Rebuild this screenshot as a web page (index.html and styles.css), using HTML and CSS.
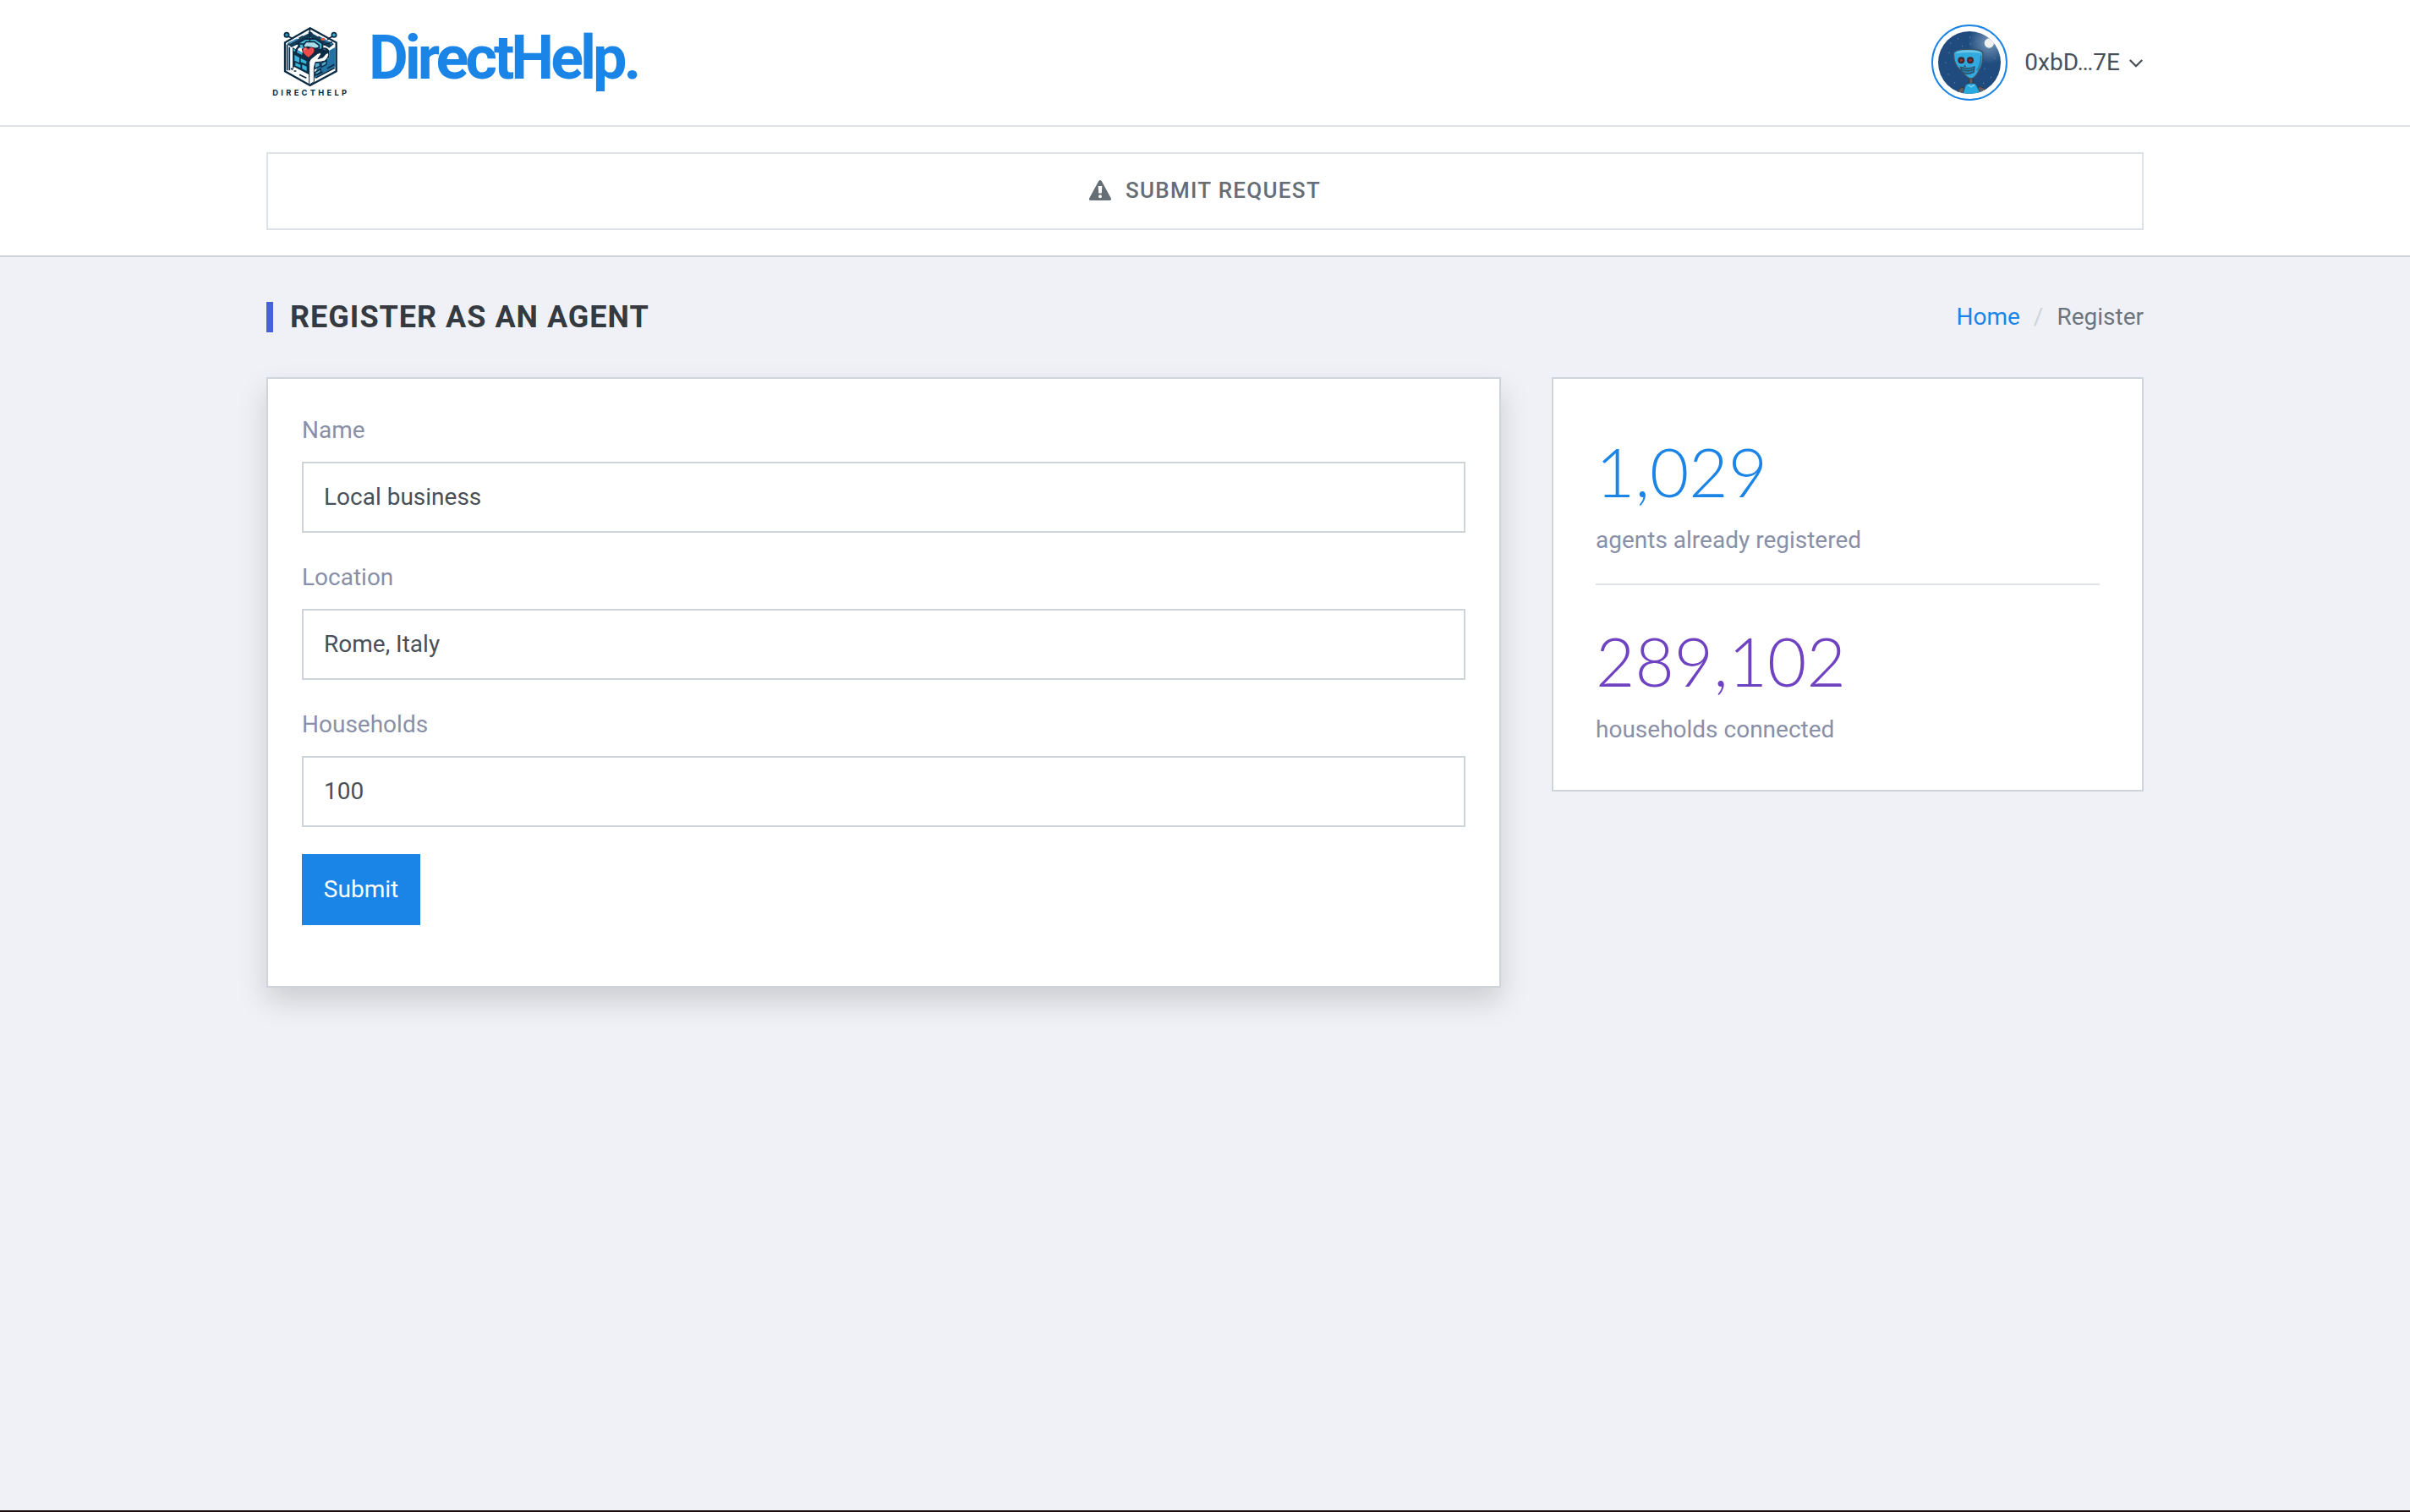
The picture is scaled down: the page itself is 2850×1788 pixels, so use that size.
FILE: index.html
```html
<!DOCTYPE html>
<html lang="en">
<head>
<meta charset="utf-8">
<title>DirectHelp</title>
<link rel="stylesheet" href="styles.css">
</head>
<body>
<header class="header">
  <div class="container header-row">
    <a class="brand">
      <svg class="brand-logo" viewBox="45 45 300 270">
        <path d="M200 70 293 121V223L200 273 111 223V121Z" fill="#fff" stroke="#0a2a43" stroke-width="7"/>
        <path d="M200 82 285 126 268 140 234 121 200 102 166 122 134 138 118 126Z" fill="#153c56"/>
        <path d="M128 122 160 104M174 96 194 86M210 87 230 98" stroke="#e9f4f8" stroke-width="5"/>
        <path d="M124 124 155 109M237 104 278 127" stroke="#2f86c4" stroke-width="5"/>
        <path d="M127 137V220M119 128V220" stroke="#0a2a43" stroke-width="5"/>
        <path d="M138 138 200 172V246L138 218Z" fill="#0d3048"/>
        <path d="M141 143 172 157V165L141 151ZM145 165 162 174V192L145 185ZM167 177 187 187V197L167 190ZM172 199 188 206V222L172 214ZM148 192 166 200V211L148 203Z" fill="#36b5d8"/>
        <path d="M208 250 290 207V137L268 149V174L245 190 225 190V212Z" fill="#2374a5"/>
        <path d="M215 192H235V204L217 214ZM240 194 258 184V198L240 208ZM218 226 238 215V226L218 237Z" fill="#55aacd" stroke="#0a2a43" stroke-width="4"/>
        <path d="M219 247 287 211M222 236 245 225M261 213 286 199" stroke="#0a2a43" stroke-width="5"/>
        <path d="M160 139V121L183 108H219L244 124V143L224 154" fill="#4ab9d5" stroke="#0a2a43" stroke-width="6"/>
        <path d="M176 131 186 118H215L232 130V139L214 145H184Z" fill="#a9dce9" stroke="#0a2a43" stroke-width="5"/>
        <path d="M199 72V117M151 126H179M247 130 279 119" stroke="#0a2a43" stroke-width="5"/>
        <path d="M150 157Q150 142 164 132M242 144Q256 138 265 151" fill="none" stroke="#0a2a43" stroke-width="7"/>
        <path d="M170 143 190 134 222 140 268 150 268 174 240 190 206 190 182 182Z" fill="#0a2a43"/>
        <path d="M143 207 195 234V247L137 219Z" fill="#fff"/>
        <path d="M132 213 139 217M143 222 151 222M162 235 187 247" stroke="#0a2a43" stroke-width="5"/>
        <path d="M197 268V190Q200 179 208 175L227 160Q236 155 240 161L228 179 246 173 256 161Q263 155 267 162 265 174 253 186 242 190 219 191L214 210V260L200 269Z" fill="#fff" stroke="#0a2a43" stroke-width="3"/>
        <path d="M194 174C182 164 174 159 174 148C174 136 188 134 194 145C200 134 215 136 215 149C214 160 204 166 194 174Z" fill="#ee4a4b" stroke="#5a2434" stroke-width="2"/>
        <path d="M180 148Q180 143 185 142" fill="none" stroke="#ffaaa0" stroke-width="3"/>
        <ellipse cx="246" cy="109" rx="8" ry="5" fill="#f0563c"/>
        <path d="M123 99 139 107M279 99 261 110" stroke="#0a2a43" stroke-width="5"/>
        <circle cx="117" cy="94" r="8" fill="#2595b8" stroke="#0a2a43" stroke-width="5"/>
        <circle cx="285" cy="94" r="8" fill="#36b5d8" stroke="#0a2a43" stroke-width="5"/>
        <text class="logo-text" x="67" y="308" textLength="263">DIRECTHELP</text>
      </svg>
      <span class="brand-name">DirectHelp.</span>
    </a>
    <div class="account">
      <svg class="avatar" viewBox="42 27 270 270">
        <defs>
          <radialGradient id="sky" gradientUnits="userSpaceOnUse" cx="247" cy="92" r="75">
            <stop offset="0" stop-color="#7898b8"/><stop offset="1" stop-color="#1f4b7e"/>
          </radialGradient>
          <clipPath id="disc"><circle cx="177" cy="162" r="111"/></clipPath>
        </defs>
        <circle cx="177" cy="162" r="132" fill="#fff" stroke="#1b84e7" stroke-width="6"/>
        <g clip-path="url(#disc)">
          <path d="M60 45H294V279H60Z" fill="url(#sky)"/>
          <path d="M110 91v5M136 75v5M179 70v5M151 101v5M105 125v5M93 160v5M102 201v5M231 182v5M254 212v5M227 233v5M267 145v5M181 94v5M125 231v5M203 83v5" stroke="#5d82aa" stroke-width="3"/>
          <circle cx="247" cy="93" r="17" fill="#f1f1f2"/>
          <path d="M176 216H189V242H176Z" fill="#625d66" stroke="#34333c" stroke-width="3"/>
          <path d="M134 275Q136 249 157 250L155 275ZM208 247Q238 248 239 275H208Z" fill="#625d66" stroke="#393943" stroke-width="3"/>
          <path d="M151 280 164 241Q183 230 201 241L220 280Z" fill="#28a9df" stroke="#245f82" stroke-width="3"/>
          <path d="M172 241 183 248 196 240" fill="none" stroke="#76cdec" stroke-width="5"/>
          <path d="M121 130C122 117 145 115 172 115C202 115 224 117 225 130C226 155 222 175 210 192C202 207 193 219 183 219C170 219 158 203 147 190C130 178 121 160 121 130Z" fill="#32a9df" stroke="#41515f" stroke-width="4"/>
          <path d="M126 130Q135 118 172 118 213 118 221 130 180 122 126 130Z" fill="#70c7e8"/>
          <path d="M218 138Q218 170 204 190" fill="none" stroke="#247da9" stroke-width="5"/>
          <circle cx="148" cy="154" r="12" fill="#392c35"/><circle cx="180" cy="154" r="12" fill="#392c35"/>
          <circle cx="148" cy="154" r="5" fill="#9d3029"/><circle cx="180" cy="154" r="5" fill="#9d3029"/>
          <path d="M146 178Q174 186 195 177L192 196Q168 208 151 196Z" fill="#247ca7" stroke="#314b61" stroke-width="4"/>
          <path d="M151 188Q174 195 191 187M163 169l-6 6h8" fill="none" stroke="#314b61" stroke-width="3"/>
        </g>
      </svg>
      <span class="account-name">0xbD…7E</span>
      <svg class="chevron" viewBox="0 0 18 12"><path d="M1.800 2 9 9.200 16.200 2" fill="none" stroke="#495057" stroke-width="2.300"/></svg>
    </div>
  </div>
</header>
<nav class="nav">
  <div class="container">
    <a class="nav-button">
      <svg class="warning" viewBox="0 0 26 24"><path fill-rule="evenodd" d="M11.300 1Q13 -1 14.700 1L25.600 21Q27 24 24 24H2Q-1 24 .4 21ZM10.700 7 11.200 15.500H14.800L15.300 7ZM13 17.200A2 2 0 1 0 13 21.200 2 2 0 1 0 13 17.200Z" fill="#656d75"/></svg>
      <span>SUBMIT REQUEST</span>
    </a>
  </div>
</nav>
<main class="container main">
  <div class="page-head">
    <h1 class="page-title">REGISTER AS AN AGENT</h1>
    <div class="breadcrumb"><a class="crumb-link">Home</a><span class="crumb-sep">/</span><span>Register</span></div>
  </div>
  <div class="columns">
    <form class="card form-card">
      <div class="field"><label class="label" for="name">Name</label><input class="input" id="name" value="Local business"></div>
      <div class="field"><label class="label" for="location">Location</label><input class="input" id="location" value="Rome, Italy"></div>
      <div class="field"><label class="label" for="households">Households</label><input class="input" id="households" value="100"></div>
      <button class="submit" type="button">Submit</button>
    </form>
    <aside class="card stats">
      <div class="stat"><div class="number">1,029</div><div class="caption">agents already registered</div></div>
      <div class="stat second"><div class="number purple">289,102</div><div class="caption">households connected</div></div>
    </aside>
  </div>
</main>
<footer class="footer"></footer>
</body>
</html>
```
FILE: styles.css
```css
* { box-sizing: border-box; }
body {
  margin: 0;
  height: 1788px;
  display: flex;
  flex-direction: column;
  background: #f0f1f6;
  font: 28px/42px Roboto, sans-serif;
  color: #495057;
}
svg { display: block; flex: none; }
.container { width: 2220px; margin: 0 auto; }
.header { height: 150px; background: #fff; border-bottom: 2px solid #dee2e6; }
.header-row { height: 148px; display: flex; justify-content: space-between; align-items: center; }
.brand { display: flex; align-items: center; gap: 21px; padding-bottom: 8px; }
.brand-logo { width: 100px; height: 90px; }
.logo-text { font: 700 28px Inter, sans-serif; fill: #0a2a43; }
.brand-name { font-size: 72px; line-height: 84px; font-weight: 700; letter-spacing: -4px; color: #1b84e7; padding-bottom: 2px; }
.account { display: flex; align-items: center; }
.avatar { width: 90px; height: 90px; margin-right: 20px; }
.chevron { width: 18px; height: 12px; margin: 2px 0 0 10px; }
.nav { height: 154px; padding-top: 30px; background: #fff; border-bottom: 2px solid #ced4da; }
.nav-button {
  height: 92px;
  padding-bottom: 2px;
  display: flex;
  align-items: center;
  justify-content: center;
  gap: 17px;
  border: 2px solid #dee2e6;
  font-size: 26px;
  font-weight: 500;
  letter-spacing: 1.3px;
  color: #656d75;
}
.warning { width: 26px; height: 24px; }
.main { flex: 1; }
.page-head { display: flex; justify-content: space-between; align-items: center; height: 142px; }
.page-title { margin: 0; padding-left: 20px; border-left: 8px solid #4861d6; font-size: 36px; line-height: 36px; font-weight: 700; letter-spacing: 1px; color: #343a40; }
.breadcrumb { display: flex; color: #6c757d; }
.crumb-link { color: #1b84e7; }
.crumb-sep { padding: 0 16px; color: #ced4da; }
.columns { display: flex; gap: 60px; align-items: flex-start; }
.card { background: #fff; border: 2px solid #ced4da; }
.form-card { width: 1460px; height: 722px; padding: 40px; box-shadow: 0 16px 32px rgba(0, 0, 0, .15); }
.field { margin-bottom: 32px; }
.label { display: block; margin-bottom: 16px; color: #8a8fa8; }
.input { display: block; width: 100%; height: 84px; padding: 0 24px 2px; border: 2px solid #ced4da; background: #fff; font: inherit; color: #495057; }
.submit { display: block; width: 140px; height: 84px; padding: 0; border: 0; background: #1b84e7; color: #fff; font: inherit; }
.stats { width: 700px; padding: 50px; }
.number { height: 120px; font: 300 80px/118px Lato, sans-serif; color: #1b84e7; }
.purple { color: #6f42c1; }
.caption { color: #8a8fa8; }
.second { margin-top: 30px; padding-top: 30px; border-top: 2px solid #dee2e6; }
.footer { height: 2px; background: #1a0a05; }
```
